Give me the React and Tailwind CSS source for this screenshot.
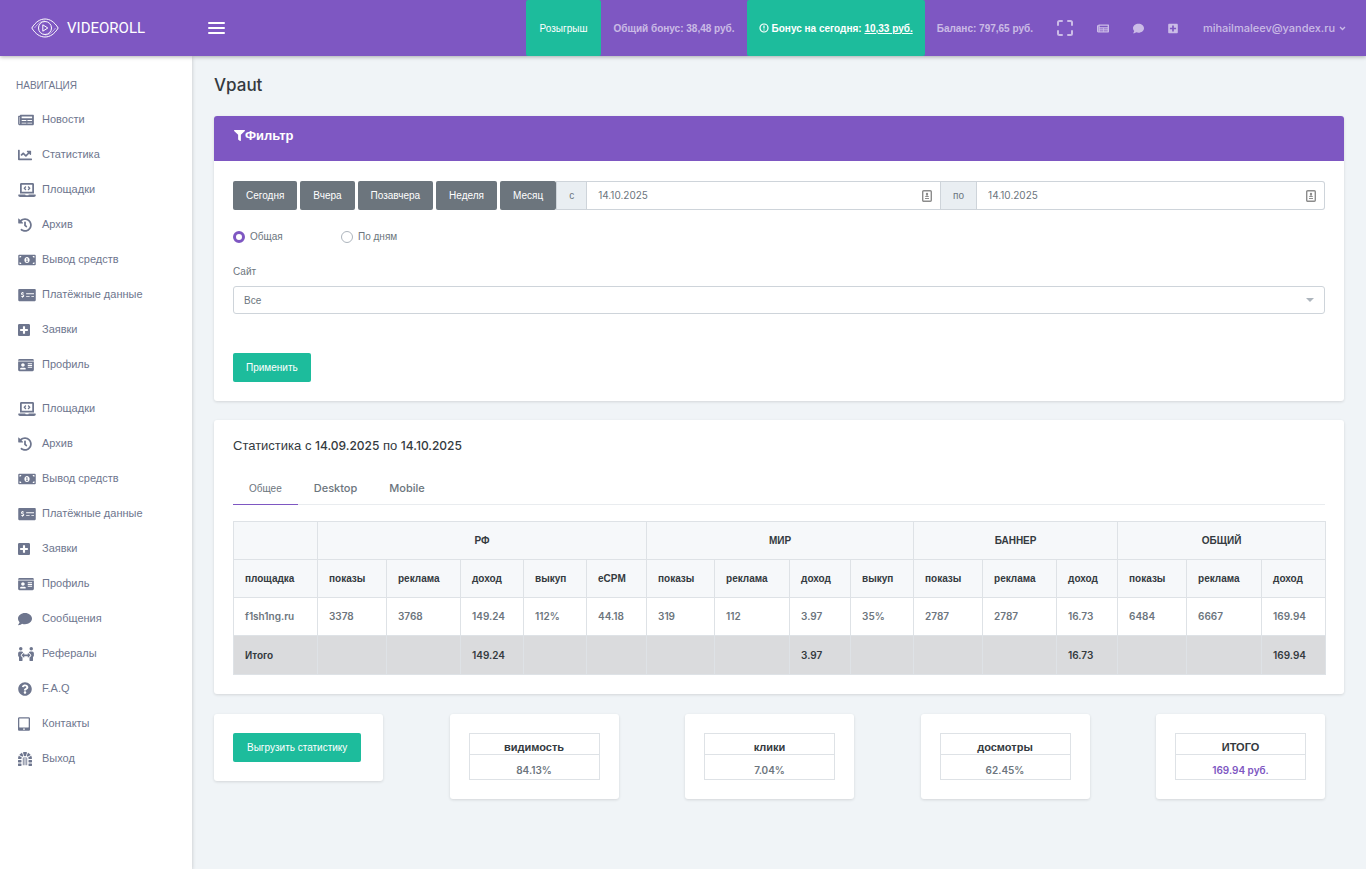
import { useState } from 'react'
import {
  FaChartLine,
  FaComment,
  FaDungeon,
  FaFilter,
  FaHistory,
  FaIdCard,
  FaLaptopCode,
  FaMoneyBillAlt,
  FaMoneyCheckAlt,
  FaNewspaper,
  FaPeopleArrows,
  FaPlusSquare,
  FaQuestionCircle,
  FaTabletAlt,
} from 'react-icons/fa'

const mainNav = [
  { label: 'Новости', icon: FaNewspaper, width: 'w-4' },
  { label: 'Статистика', icon: FaChartLine, width: 'w-[14px]' },
  { label: 'Площадки', icon: FaLaptopCode, width: 'w-[18px]' },
  { label: 'Архив', icon: FaHistory, width: 'w-[14px]' },
  { label: 'Вывод средств', icon: FaMoneyBillAlt, width: 'w-[18px]' },
  { label: 'Платёжные данные', icon: FaMoneyCheckAlt, width: 'w-[18px]' },
  { label: 'Заявки', icon: FaPlusSquare, width: 'w-3' },
  { label: 'Профиль', icon: FaIdCard, width: 'w-4' },
]

const secondNav = [
  { label: 'Площадки', icon: FaLaptopCode, width: 'w-[18px]' },
  { label: 'Архив', icon: FaHistory, width: 'w-[14px]' },
  { label: 'Вывод средств', icon: FaMoneyBillAlt, width: 'w-[18px]' },
  { label: 'Платёжные данные', icon: FaMoneyCheckAlt, width: 'w-[18px]' },
  { label: 'Заявки', icon: FaPlusSquare, width: 'w-3' },
  { label: 'Профиль', icon: FaIdCard, width: 'w-4' },
  { label: 'Сообщения', icon: FaComment, width: 'w-[14px]' },
  { label: 'Рефералы', icon: FaPeopleArrows, width: 'w-4' },
  { label: 'F.A.Q', icon: FaQuestionCircle, width: 'w-[14px]' },
  { label: 'Контакты', icon: FaTabletAlt, width: 'w-3' },
  { label: 'Выход', icon: FaDungeon, width: 'w-[14px]' },
]

const periods = ['Сегодня', 'Вчера', 'Позавчера', 'Неделя', 'Месяц']

const colWidths = [84, 69, 74, 63, 63, 60, 68, 75, 61, 63, 69, 74, 61, 69, 75, 64]

const groups = [
  { title: '', span: 1 },
  { title: 'РФ', span: 5 },
  { title: 'МИР', span: 4 },
  { title: 'БАННЕР', span: 3 },
  { title: 'ОБЩИЙ', span: 3 },
]

const columns = [
  'площадка',
  'показы', 'реклама', 'доход', 'выкуп', 'eCPM',
  'показы', 'реклама', 'доход', 'выкуп',
  'показы', 'реклама', 'доход',
  'показы', 'реклама', 'доход',
]

const siteRow = [
  'f1sh1ng.ru',
  '3378', '3768', '149.24', '112%', '44.18',
  '319', '112', '3.97', '35%',
  '2787', '2787', '16.73',
  '6484', '6667', '169.94',
]

const totalRow = ['Итого', '', '', '149.24', '', '', '', '', '3.97', '', '', '', '16.73', '', '', '169.94']

const summary = [
  { title: 'видимость', value: '84.13%' },
  { title: 'клики', value: '7.04%' },
  { title: 'досмотры', value: '62.45%' },
  { title: 'ИТОГО', value: '169.94 руб.', accent: true },
]

function Logo() {
  return (
    <a href="#" className="flex w-[192px] shrink-0 items-center gap-2 pl-[31px] text-white">
      <svg width="28" height="20" viewBox="0 0 28 20" fill="none" stroke="currentColor" strokeWidth="1">
        <path d="M.8 10C4.5 4 9 1 14 1s9.500 3 13.200 9C23.500 16 19 19 14 19S4.500 16 .8 10z" />
        <path d="M3.500 10C7 5.200 10.300 3 14 3M24.500 10C21 14.800 17.700 17 14 17" strokeOpacity=".5" />
        <circle cx="14" cy="10" r="6.500" />
        <path d="M11.800 6.800v6.400l5-3.200z" />
      </svg>
      <span className="font-['Roboto',sans-serif] text-[15px] leading-5">VIDEOROLL</span>
    </a>
  )
}

function TopBar() {
  return (
    <header className="relative z-10 flex h-14 bg-[#7e57c2] text-[10px] text-white/60 shadow-[0_1px_4px_rgba(0,0,0,0.3)]">
      <Logo />
      <button type="button" aria-label="Меню" className="ml-4 flex cursor-pointer flex-col justify-center gap-[3px]">
        <span className="h-[2px] w-[17px] rounded-full bg-white" />
        <span className="h-[2px] w-[17px] rounded-full bg-white" />
        <span className="h-[2px] w-[17px] rounded-full bg-white" />
      </button>

      <div className="ml-auto flex items-stretch whitespace-nowrap">
        <a href="#" className="flex items-center rounded-xs bg-[#1dbc9c] px-[14px] text-white">Розыгрыш</a>
        <span className="flex items-center px-3 font-bold">Общий бонус: 38,48 руб.</span>
        <a href="#" className="flex items-center gap-[3px] rounded-xs bg-[#1dbc9c] px-3 font-bold text-white">
          <svg width="10" height="10" viewBox="0 0 10 10" fill="none" stroke="currentColor" strokeWidth="1.200">
            <circle cx="5" cy="5" r="4" />
            <path d="M5 2.500v3M5 6.500v1" />
          </svg>
          <span>Бонус на сегодня: <u>10,33 руб.</u></span>
        </a>
        <span className="flex items-center px-3 font-bold">Баланс: 797,65 руб.</span>
        <button type="button" aria-label="Во весь экран" className="cursor-pointer px-3">
          <svg width="16" height="16" viewBox="0 0 16 16" fill="none" stroke="currentColor" strokeWidth="2" strokeLinecap="round">
            <path d="M1 5V2.500Q1 1 2.500 1H5M11 1h2.500Q15 1 15 2.500V5M15 11v2.500q0 1.500-1.500 1.500H11M5 15H2.500Q1 15 1 13.500V11" />
          </svg>
        </button>
        <a href="#" aria-label="Новости" className="flex items-center px-3"><FaNewspaper className="h-[11px] w-3" /></a>
        <a href="#" aria-label="Сообщения" className="flex items-center px-3"><FaComment size={11} /></a>
        <a href="#" aria-label="Заявки" className="flex items-center px-3"><FaPlusSquare className="h-[11px] w-[10px]" /></a>
        <button type="button" className="flex cursor-pointer items-center gap-1 pr-5 pl-[13px]">
          <span className="font-['Inter',sans-serif] text-[11px] font-medium">mihailmaleev@yandex.ru</span>
          <svg width="7" height="5" viewBox="0 0 7 5" fill="none" stroke="currentColor" strokeWidth="1.300">
            <path d="M1 1l2.500 2.500L6 1" />
          </svg>
        </button>
      </div>
    </header>
  )
}

function NavList({ items }) {
  return (
    <ul>
      {items.map(({ label, icon: Icon, width }) => (
        <li key={label}>
          <a href="#" className="flex items-center py-[10px] pl-[18px] leading-[15px] hover:text-[#7e57c2]">
            <span className="w-6 shrink-0"><Icon className={`h-[14px] ${width}`} /></span>
            {label}
          </a>
        </li>
      ))}
    </ul>
  )
}

function Sidebar() {
  return (
    <aside className="w-[192px] shrink-0 bg-white pt-[22px] text-[11px] text-[#6e768e] shadow-[0_1px_4px_rgba(0,0,0,0.2)]">
      <p className="px-4 pb-2 text-[10px] leading-4 uppercase">Навигация</p>
      <nav className="flex flex-col gap-[9px]">
        <NavList items={mainNav} />
        <NavList items={secondNav} />
      </nav>
    </aside>
  )
}

function ContactIcon() {
  return (
    <svg className="mr-2 shrink-0" width="10" height="12" viewBox="0 0 10 12" fill="none" stroke="#8c8c8c">
      <rect x=".7" y=".7" width="8.600" height="10.600" rx="1" strokeWidth="1.400" />
      <circle cx="5" cy="4" r="1.200" fill="#8c8c8c" stroke="none" />
      <path d="M2.800 7Q5 3.500 7.200 7z" fill="#8c8c8c" stroke="none" />
      <path d="M3 8.500h4" />
    </svg>
  )
}

function DateField({ label, value, onChange, last }) {
  return (
    <label className={`flex flex-1 border border-[#ced4da] ${last ? 'rounded-r-[3px] border-l-0' : ''}`}>
      <span className="flex items-center border-r border-[#ced4da] bg-[#e9eef2] px-3 text-[10px]">{label}</span>
      <span className="flex flex-1 items-center">
        <input
          type="text"
          value={value}
          onChange={(e) => onChange(e.target.value)}
          className="w-full min-w-0 flex-1 px-[11px] font-['Inter',sans-serif] text-[10px] outline-none"
        />
        <ContactIcon />
      </span>
    </label>
  )
}

function FilterCard() {
  const [from, setFrom] = useState('14.10.2025')
  const [to, setTo] = useState('14.10.2025')
  const [mode, setMode] = useState('total')

  return (
    <section className="rounded-[3px] bg-white shadow-[0_1px_3px_rgba(0,0,0,0.12)]">
      <h2 className="flex h-[45px] items-center rounded-t-[3px] bg-[#7e57c2] px-5 pb-[6px] text-[13px] font-bold text-white">
        <FaFilter size={11} />
        Фильтр
      </h2>
      <form className="p-[19px] pt-5 text-[10px]" onSubmit={(e) => e.preventDefault()}>
        <div className="flex h-[29px]">
          <div className="flex gap-[3px]">
            {periods.map((p) => (
              <button key={p} type="button" className="cursor-pointer rounded-[2px] bg-[#6c757d] px-[13px] text-white">{p}</button>
            ))}
          </div>
          <DateField label="с" value={from} onChange={setFrom} />
          <DateField label="по" value={to} onChange={setTo} last />
        </div>

        <div className="mt-[19px] flex leading-[15px]">
          <label className="flex w-[108px] items-center gap-[5px]">
            <input
              type="radio"
              name="mode"
              checked={mode === 'total'}
              onChange={() => setMode('total')}
              className="size-3 appearance-none rounded-full border border-[#adb5bd] bg-white checked:border-[3px] checked:border-[#7e57c2]"
            />
            Общая
          </label>
          <label className="flex items-center gap-[5px]">
            <input
              type="radio"
              name="mode"
              checked={mode === 'days'}
              onChange={() => setMode('days')}
              className="size-3 appearance-none rounded-full border border-[#adb5bd] bg-white checked:border-[3px] checked:border-[#7e57c2]"
            />
            По дням
          </label>
        </div>

        <label htmlFor="site" className="mt-5 block leading-[15px]">Сайт</label>
        <div className="mt-[7px] grid items-center">
          <select
            id="site"
            className="col-start-1 row-start-1 h-7 w-full appearance-none rounded-[3px] border border-[#ced4da] bg-white px-[10px]"
          >
            <option>Все</option>
          </select>
          <svg className="pointer-events-none col-start-1 row-start-1 mr-[11px] justify-self-end" width="8" height="4" viewBox="0 0 8 4">
            <path d="M0 0h8L4 4z" fill="#adb5bd" />
          </svg>
        </div>

        <button type="submit" className="mt-[39px] block h-[29px] cursor-pointer rounded-[2px] bg-[#1dbc9c] px-[13px] text-white">
          Применить
        </button>
      </form>
    </section>
  )
}

function StatsTable() {
  return (
    <table className="mt-4 w-full table-fixed border-collapse text-left text-[10px] [&_td]:border [&_td]:border-[#dee2e6] [&_td]:px-[11px] [&_th]:border [&_th]:border-[#dee2e6] [&_th]:px-[11px]">
      <colgroup>
        {colWidths.map((w, i) => (
          <col key={i} style={{ width: w }} />
        ))}
      </colgroup>
      <thead className="bg-[#f6f8fa] text-[#343a40]">
        <tr className="h-[38px]">
          {groups.map((g, i) => (
            <th key={i} colSpan={g.span} className="text-center font-bold">{g.title}</th>
          ))}
        </tr>
        <tr className="h-[38px]">
          {columns.map((c, i) => (
            <th key={i} className="font-bold">{c}</th>
          ))}
        </tr>
      </thead>
      <tbody className="font-['Inter',sans-serif] font-semibold">
        <tr className="h-[38px]">
          {siteRow.map((v, i) => (
            <td key={i}>{v}</td>
          ))}
        </tr>
        <tr className="h-[39px] bg-[#dadbdd] text-[#343a40]">
          {totalRow.map((v, i) => (
            <td key={i} className={i === 0 ? "font-['Liberation_Sans',sans-serif] font-bold" : ''}>{v}</td>
          ))}
        </tr>
      </tbody>
    </table>
  )
}

const tabs = [
  { name: 'Общее', font: 'text-[10px]' },
  { name: 'Desktop', font: "font-['Inter',sans-serif] text-[11px] font-medium" },
  { name: 'Mobile', font: "font-['Inter',sans-serif] text-[11px] font-medium" },
]

function StatsCard() {
  const [active, setActive] = useState('Общее')

  return (
    <section className="mt-[19px] rounded-[3px] bg-white p-[19px] pt-4 shadow-[0_1px_3px_rgba(0,0,0,0.12)]">
      <h2 className="text-[13px] leading-5 text-[#343a40]">
        Статистика с <span className="font-['Inter',sans-serif] text-[12px] font-medium">14.09.2025</span> по{' '}
        <span className="font-['Inter',sans-serif] text-[12px] font-medium">14.10.2025</span>
      </h2>
      <div role="tablist" className="mt-[17px] flex border-b border-[#e9ecef]">
        {tabs.map(({ name, font }) => (
          <button
            key={name}
            type="button"
            role="tab"
            aria-selected={active === name}
            onClick={() => setActive(name)}
            className={`-mb-px h-8 cursor-pointer border-b border-b-transparent px-4 aria-selected:border-b-[#7e57c2] ${font}`}
          >
            {name}
          </button>
        ))}
      </div>
      <StatsTable />
    </section>
  )
}

function SummaryCard({ title, value, accent }) {
  return (
    <div className="w-[15%] min-w-[169px] rounded-[3px] bg-white p-[19px] shadow-[0_1px_3px_rgba(0,0,0,0.12)]">
      <table className="w-full border-collapse text-center">
        <tbody>
          <tr>
            <th className="border border-[#dee2e6] pt-[6px] text-[11px] leading-[14px] font-bold text-[#343a40]">{title}</th>
          </tr>
          <tr>
            <td className={`border border-[#dee2e6] pt-2 pb-[2px] font-['Inter',sans-serif] text-[10px] leading-[14px] font-semibold ${accent ? 'text-[#7e57c2]' : ''}`}>
              {value}
            </td>
          </tr>
        </tbody>
      </table>
    </div>
  )
}

export default function App() {
  return (
    <div className="flex min-h-screen flex-col bg-[#f0f4f7] font-['Liberation_Sans',Arial,sans-serif] text-[#6c757d]">
      <TopBar />
      <div className="flex flex-1">
        <Sidebar />
        <main className="min-w-0 flex-1 px-[22px] pt-[17px]">
          <h1 className="mb-[19px] font-['Inter',sans-serif] text-[17px] leading-6 font-medium text-[#343a40]">Vpaut</h1>
          <FilterCard />
          <StatsCard />
          <div className="mt-5 flex items-start justify-between pr-[19px]">
            <div className="w-[15%] min-w-[169px] rounded-[3px] bg-white p-[19px] shadow-[0_1px_3px_rgba(0,0,0,0.12)]">
              <button type="button" className="h-[29px] cursor-pointer rounded-[2px] bg-[#1dbc9c] px-[14px] text-[10px] whitespace-nowrap text-white">
                Выгрузить статистику
              </button>
            </div>
            {summary.map((s) => (
              <SummaryCard key={s.title} {...s} />
            ))}
          </div>
        </main>
      </div>
    </div>
  )
}
